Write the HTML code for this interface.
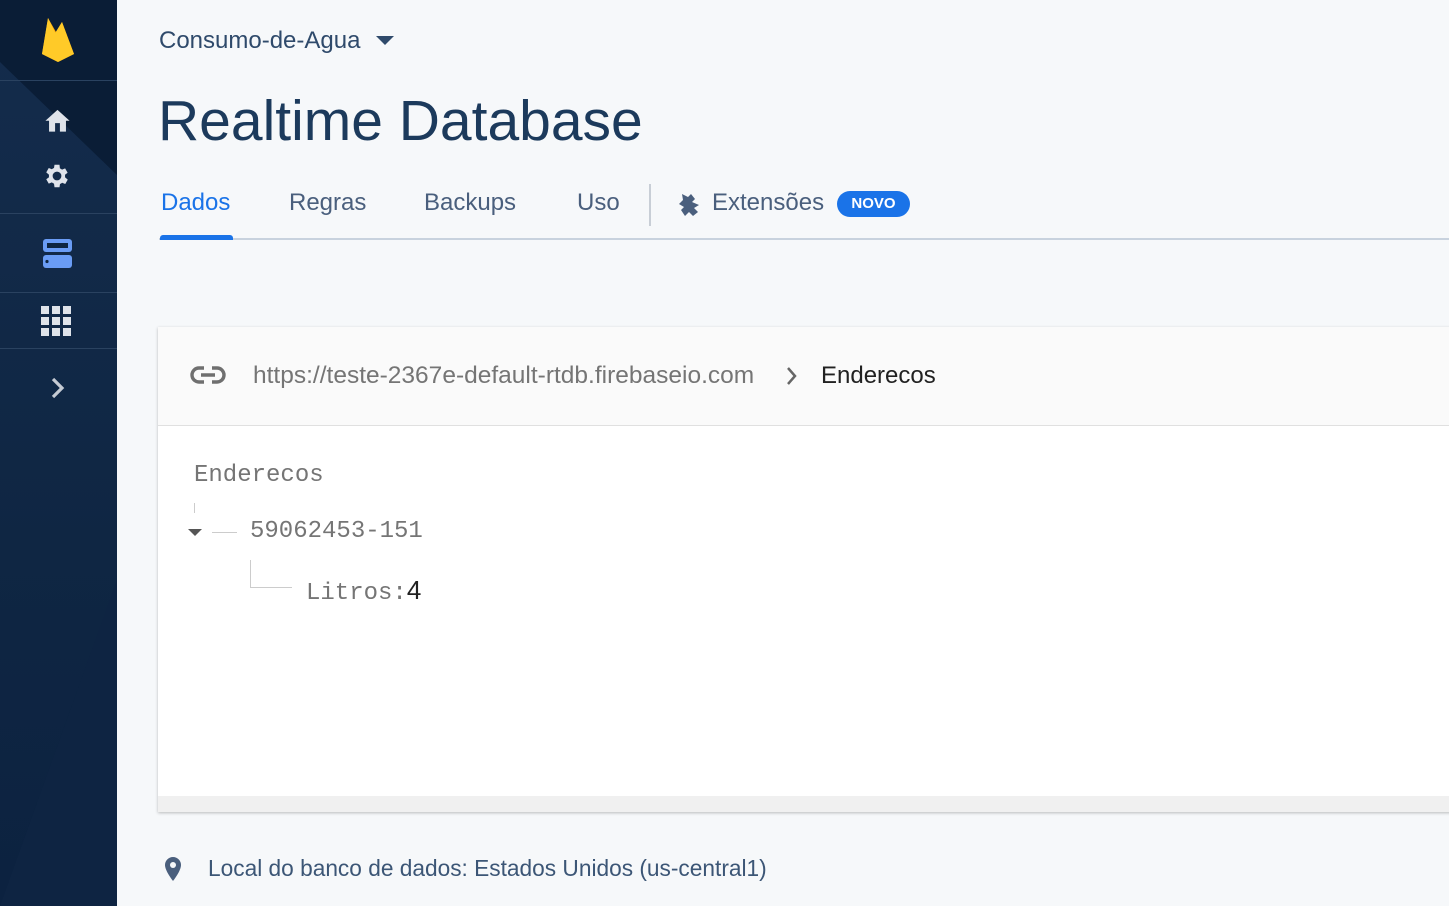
<!DOCTYPE html>
<html><head><meta charset="utf-8"><style>
body{margin:0;width:1449px;height:906px;overflow:hidden;background:#f6f8fa;font-family:"Liberation Sans",sans-serif;position:relative}
.sb{position:absolute;left:0;top:0;width:117px;height:906px;background:linear-gradient(#142c4c,#0f2643 60%,#0c2240);overflow:hidden}
.sb .dk{position:absolute;left:0;top:0;width:117px;height:906px;background:#0a1d36;clip-path:polygon(0 0,117px 0,117px 175px,0 62px)}
.sb .dk2{position:absolute;left:0;top:0;width:117px;height:906px;background:#0e2442;clip-path:polygon(0 906px,117px 580px,117px 906px)}
.hr{position:absolute;left:0;width:117px;height:1px;background:#2a4260}
.abs{position:absolute}
.tab{position:absolute;top:189px;font-size:24px;color:#4a5f7d}
.mono{font-family:"Liberation Mono",monospace;color:#757575;font-size:24px;position:absolute}
</style></head><body>
<div class="sb"><div class="dk"></div><div class="dk2"></div>
<div class="hr" style="top:80px"></div><div class="hr" style="top:213px"></div><div class="hr" style="top:292px"></div><div class="hr" style="top:348px"></div>
<svg class="abs" style="left:40px;top:14px" width="36" height="48" viewBox="0 0 36 48"><path d="M2 40L8 4l8 14 6-10 12 32-16 8z" fill="#ffa000"/><path d="M2 40L8 4l10 20z" fill="#ffca28"/><path d="M2 40l16 8 16-8-12-32z" fill="#ffca28"/></svg>
<svg class="abs" style="left:43px;top:106px" width="29" height="27" viewBox="0 0 24 22"><path d="M10 21v-7h4v7h5v-9h3L12 3 2 12h3v9z" fill="#dfe3ea"/></svg>
<svg class="abs" style="left:42px;top:161px" width="30" height="30" viewBox="0 0 24 24"><path fill="#dfe3ea" d="M19.4 13a7.5 7.5 0 000-2l2.1-1.6-2-3.5-2.5 1a7 7 0 00-1.7-1L15 3h-4l-.4 2.6a7 7 0 00-1.7 1l-2.5-1-2 3.5L6.6 11a7.5 7.5 0 000 2l-2.2 1.6 2 3.5 2.5-1a7 7 0 001.7 1L11 21h4l.4-2.6a7 7 0 001.7-1l2.5 1 2-3.5zM13 15.5a3.5 3.5 0 110-7 3.5 3.5 0 010 7z" transform="translate(-1 0)"/></svg>
<svg class="abs" style="left:42px;top:238px" width="31" height="31" viewBox="0 0 31 31"><rect x="1" y="1" width="29" height="13" rx="3" fill="#6a9cf5"/><rect x="5" y="5" width="21" height="5" fill="#0e2541"/><rect x="1" y="17" width="29" height="13" rx="3" fill="#6a9cf5"/><circle cx="5" cy="23.5" r="1.6" fill="#0e2541"/></svg>
<svg class="abs" style="left:41px;top:306px" width="30" height="30" viewBox="0 0 30 30" fill="#dfe3ea"><rect x="0" y="0" width="8" height="8"/><rect x="11" y="0" width="8" height="8"/><rect x="22" y="0" width="8" height="8"/><rect x="0" y="11" width="8" height="8"/><rect x="11" y="11" width="8" height="8"/><rect x="22" y="11" width="8" height="8"/><rect x="0" y="22" width="8" height="8"/><rect x="11" y="22" width="8" height="8"/><rect x="22" y="22" width="8" height="8"/></svg>
<svg class="abs" style="left:50px;top:377px" width="16" height="22" viewBox="0 0 16 22"><path d="M3 2l9 9-9 9" stroke="#c5cbd4" stroke-width="3.2" fill="none"/></svg>
</div>
<div class="abs" style="left:159px;top:27px;font-size:24px;color:#2f4a6b">Consumo-de-Agua</div>
<svg class="abs" style="left:376px;top:36px" width="18" height="10"><path d="M0 0h18L9 9z" fill="#2f4a6b"/></svg>
<div class="abs" style="left:158px;top:88px;font-size:57px;color:#1c3a5c">Realtime Database</div>
<div class="tab" style="left:161px;color:#1a73e8">Dados</div>
<div class="tab" style="left:289px">Regras</div>
<div class="tab" style="left:424px">Backups</div>
<div class="tab" style="left:577px">Uso</div>
<div class="abs" style="left:649px;top:184px;width:2px;height:42px;background:#c8ced6"></div>
<svg class="abs" style="left:678px;top:192px" width="27" height="26" viewBox="0 0 27 26"><path d="M4 2l6 3 3-3 4 5-3 3 7 3-5 3 4 4-5 4-4-4-4 4-4-6 3-3-5-3 4-4z" fill="#4a5f7d"/></svg>
<div class="tab" style="left:712px">Extensões</div>
<div class="abs" style="left:837px;top:191px;width:73px;height:26px;border-radius:13px;background:#1a73e8;color:#fff;font-weight:bold;font-size:15px;text-align:center;line-height:26px">NOVO</div>
<div class="abs" style="left:159px;top:238px;width:1290px;height:2px;background:#c8d2de"></div>
<div class="abs" style="left:160px;top:235px;width:73px;height:5px;background:#1a73e8;border-radius:3px 3px 0 0"></div>
<div class="abs" style="left:158px;top:327px;width:1300px;height:485px;background:#fff;box-shadow:0 1px 3px rgba(0,0,0,.25)">
<div style="height:98px;background:#fafafa;border-bottom:1px solid #e0e0e0;position:relative">
<svg class="abs" style="left:32px;top:38px" width="36" height="20" viewBox="0 0 36 20"><path d="M14 3H9a7 7 0 000 14h5M22 3h5a7 7 0 010 14h-5M11 10h14" stroke="#6f6f6f" stroke-width="3.4" fill="none"/></svg>
<div class="abs" style="left:95px;top:35px;font-size:24.5px;color:#757575">https://teste-2367e-default-rtdb.firebaseio.com</div>
<svg class="abs" style="left:628px;top:39px" width="12" height="20"><path d="M2 2l7 8-7 8" stroke="#666" stroke-width="2.5" fill="none"/></svg>
<div class="abs" style="left:663px;top:35px;font-size:24px;color:#212121">Enderecos</div>
</div>
<div style="position:absolute;left:0;bottom:0;width:100%;height:16px;background:#f0f0f0"></div>
</div>
<div class="mono" style="left:194px;top:462px">Enderecos</div>
<div class="abs" style="left:194px;top:503px;width:1px;height:10px;background:#ccc"></div>
<svg class="abs" style="left:188px;top:529px" width="14" height="8"><path d="M0 0h14L7 7z" fill="#555"/></svg>
<div class="abs" style="left:212px;top:532px;width:25px;height:1px;background:#ccc"></div>
<div class="mono" style="left:250px;top:518px">59062453-151</div>
<div class="abs" style="left:250px;top:560px;width:1px;height:27px;background:#ccc"></div>
<div class="abs" style="left:250px;top:587px;width:42px;height:1px;background:#ccc"></div>
<div class="mono" style="left:306px;top:575px">Litros:<span style="color:#212121;font-family:'Liberation Sans',sans-serif;font-size:26px">4</span></div>
<svg class="abs" style="left:164px;top:856px" width="18" height="26" viewBox="0 0 18 26"><path d="M9 1a8 8 0 00-8 8c0 6 8 16 8 16s8-10 8-16a8 8 0 00-8-8z" fill="#4a5f7d"/><circle cx="9" cy="9" r="3" fill="#f6f8fa"/></svg>
<div class="abs" style="left:208px;top:855px;font-size:22.7px;color:#3c5676">Local do banco de dados: Estados Unidos (us-central1)</div>
</body></html>
